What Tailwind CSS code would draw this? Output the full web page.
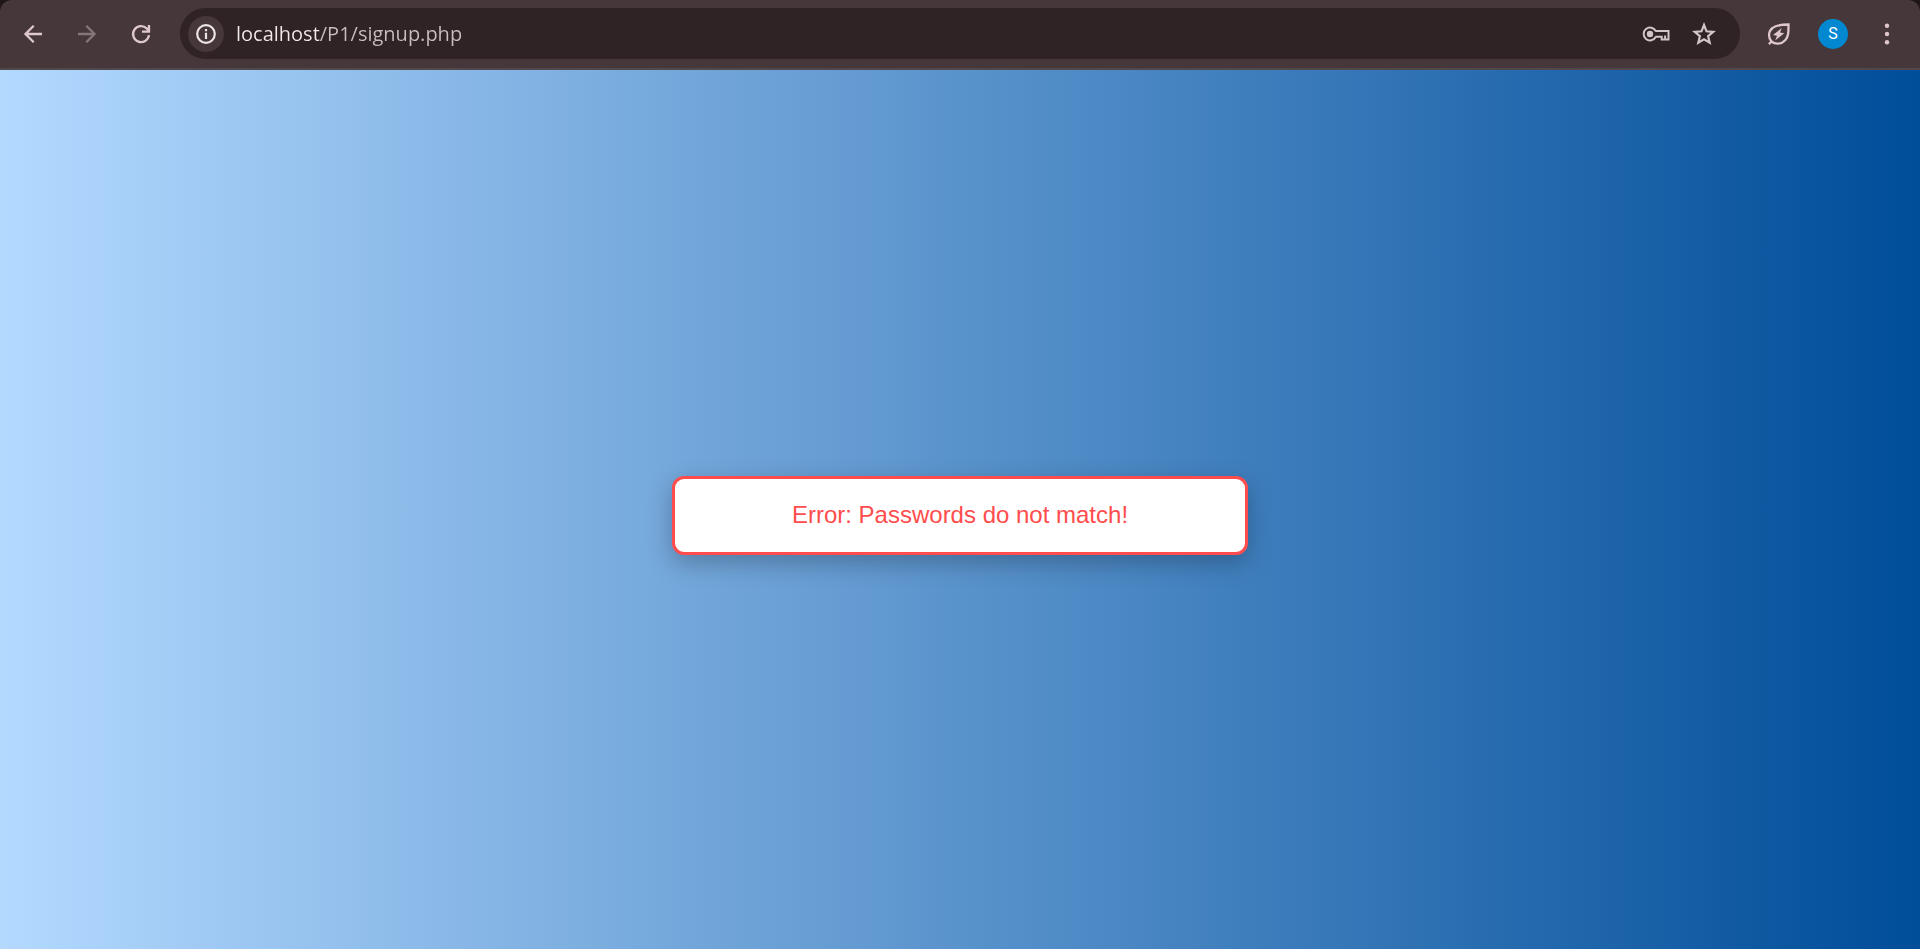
<!DOCTYPE html>
<html lang="en">
<head>
<meta charset="utf-8">
<meta name="viewport" content="width=device-width, initial-scale=1">
<title>Sign up</title>
<script src="https://cdn.jsdelivr.net/npm/@tailwindcss/browser@4"></script>
</head>
<body class="flex min-h-screen flex-col bg-[#201517]">
<!-- Browser toolbar -->
<header class="flex h-[70px] shrink-0 items-center gap-[18px] rounded-t-xl border-b-2 border-[#50484a] bg-[#46373a] px-3 pb-px text-[#dfc8cb]">
  <nav class="flex gap-3" aria-label="Navigation">
    <button class="grid size-[42px] place-items-center" aria-label="Back">
      <svg class="size-6" viewBox="0 0 24 24" fill="none" stroke="currentColor" stroke-width="2.300"><path d="M21 12H4.500M12.700 3.800 4.500 12l8.200 8.200"/></svg>
    </button>
    <button class="grid size-[42px] place-items-center text-[#857678]" aria-label="Forward">
      <svg class="size-6" viewBox="0 0 24 24" fill="none" stroke="currentColor" stroke-width="2.300"><path d="M3 12h16.500M11.300 3.800l8.200 8.200-8.200 8.200"/></svg>
    </button>
    <button class="grid size-[42px] place-items-center" aria-label="Reload">
      <svg class="size-6" viewBox="0 0 24 24" fill="none" stroke="currentColor" stroke-width="2.300"><path d="M20 13.200A8 8 0 1 1 17.700 6.400l2 2.400"/><path d="M20 3v6.600h-7"/></svg>
    </button>
  </nav>
  <div class="flex h-[51px] min-w-0 flex-1 items-center rounded-full bg-[#2f2325] pl-2 pr-3">
    <button class="grid size-9 shrink-0 place-items-center rounded-full bg-[#46373a] text-[#ede4e5]" aria-label="Site information">
      <svg class="size-6" viewBox="0 0 24 24" fill="none" stroke="currentColor" stroke-width="2.200"><circle cx="12" cy="12" r="8.800"/><path d="M12 10.800v6.200M12 7v2.200"/></svg>
    </button>
    <input aria-label="Address" type="text" value="localhost/P1/signup.php" class="ml-3 h-9 min-w-0 flex-1 bg-[linear-gradient(to_right,#f2eaeb_83px,#c9bfc0_83px)] bg-clip-text font-['Open_Sans',sans-serif] text-[20px] text-transparent outline-none">
    <button class="grid size-12 shrink-0 place-items-center text-[#d2c5c7]" aria-label="Manage passwords">
      <svg class="h-5 w-7" viewBox="0 0 28 20" fill="none" stroke="currentColor" stroke-width="2"><path d="M13.200 7H26.500v8.500h-6.800V12.700H13.200M23.100 15.500v-4"/><path d="M13.700 7a6.400 6.400 0 1 0 0 6"/><circle cx="8" cy="10" r="3.200" fill="currentColor" stroke="none"/></svg>
    </button>
    <button class="grid size-12 shrink-0 place-items-center text-[#d2c5c7]" aria-label="Bookmark this page">
      <svg class="size-7" viewBox="0 0 28 28" fill="none" stroke="currentColor" stroke-width="2.200"><path d="m14 5 2.500 6.300 6.700.5-5.100 4.400 1.600 6.500-5.700-3.500-5.700 3.500 1.600-6.500-5.100-4.400 6.700-.5z"/></svg>
    </button>
  </div>
  <div class="flex gap-3">
    <button class="grid size-[42px] place-items-center" aria-label="Energy saver">
      <svg class="size-6" viewBox="0 0 24 24" fill="none" stroke="currentColor" stroke-width="2.300"><path d="M4.500 19.500C.8 15.500 1.400 9.300 5.500 6 9 3 14.500 2.500 21.500 2.500c0 7 .2 12-3.300 15.800-3.700 4-9.700 4.600-13.700 1.200Zm0 0-2.600 2.600"/><path d="m14.800 6-8.800 6.900 4 .8-1.800 4.700 9-7.100-4.200-.8z" fill="currentColor" stroke="none"/></svg>
    </button>
    <button class="grid size-[42px] place-items-center" aria-label="Profile">
      <span class="grid size-[30px] place-items-center rounded-full bg-[#0288d1] font-['Roboto',sans-serif] text-base text-white">S</span>
    </button>
    <button class="grid size-[42px] place-items-center" aria-label="Menu">
      <svg class="size-6" viewBox="0 0 24 24" fill="currentColor"><circle cx="12" cy="3.700" r="2.200"/><circle cx="12" cy="12" r="2.200"/><circle cx="12" cy="20.300" r="2.200"/></svg>
    </button>
  </div>
</header>
<!-- Page -->
<main class="flex flex-1 items-center justify-center bg-[linear-gradient(to_right,#b3d9ff,#004d99)] pt-3">
  <p role="alert" class="w-[30%] rounded-xl border-3 border-[#ff4d4d] bg-white px-5 pt-5 pb-[22px] text-center font-['Liberation_Sans',Arial,sans-serif] text-[24px] leading-[31px] text-[#ff4d4d] shadow-[0_8px_24px_rgba(0,0,0,0.25)]">Error: Passwords do not match!</p>
</main>
</body>
</html>
